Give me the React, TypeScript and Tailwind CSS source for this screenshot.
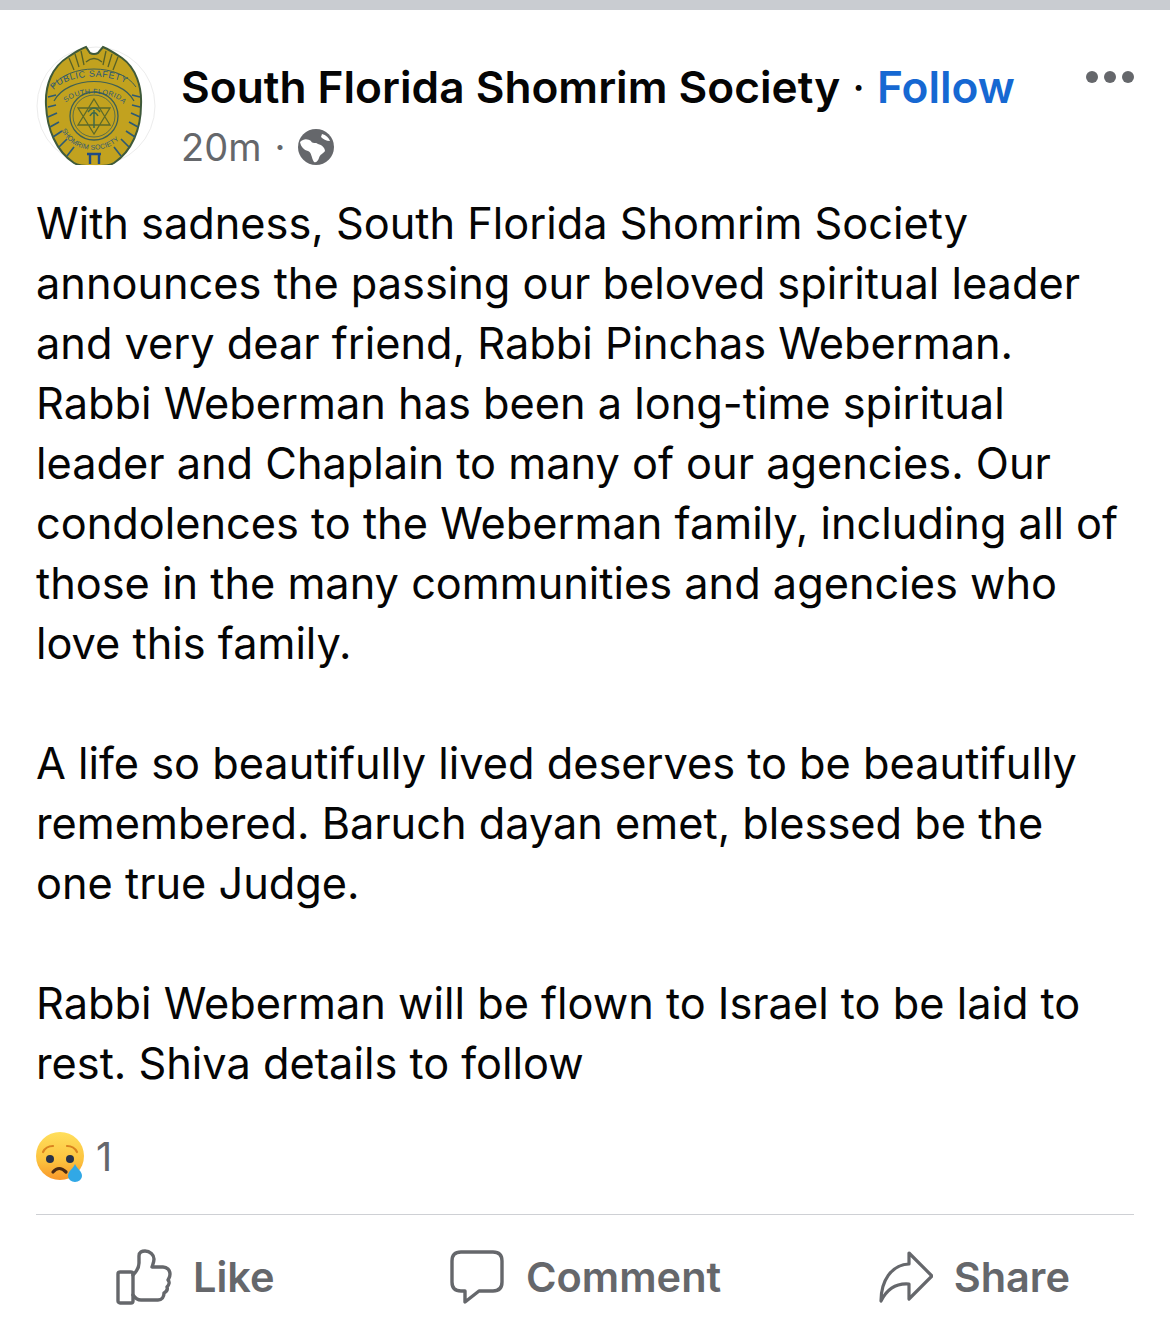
const lines = [
  "With sadness, South Florida Shomrim Society",
  "announces the passing our beloved spiritual leader",
  "and very dear friend, Rabbi Pinchas Weberman.",
  "Rabbi Weberman has been a long-time spiritual",
  "leader and Chaplain to many of our agencies. Our",
  "condolences to the Weberman family, including all of",
  "those in the many communities and agencies who",
  "love this family.",
  "",
  "A life so beautifully lived deserves to be beautifully",
  "remembered. Baruch dayan emet, blessed be the",
  "one true Judge.",
  "",
  "Rabbi Weberman will be flown to Israel to be laid to",
  "rest. Shiva details to follow",
]

function Badge() {
  return (
    <svg width="120" height="122" viewBox="0 0 120 122">
      <defs>
        <path id="arcPublic" d="M17 46C32 27 84 27 100 46" />
        <path id="arcSouth" d="M28 60C38 45 78 45 88 60" />
        <path id="arcShomrim" d="M25 84C37 112 80 112 91 82" />
        <clipPath id="badgeClip">
          <rect x="0" y="0" width="120" height="120" />
        </clipPath>
      </defs>
      <circle cx="60" cy="61" r="59" fill="#fff" stroke="#ececec" strokeWidth="1" />
      <g clipPath="url(#badgeClip)">
        <path d="M10 60C9 40 16 22 32 12C38 8 44 4 50 2L54 8Q58 10 62 8L67 2C74 5 80 9 86 13C100 23 106 42 105 60C105 84 96 106 78 118C72 122 44 122 38 118C20 106 11 84 10 60Z" fill="#c2a21f" stroke="#3f5a3a" strokeWidth="2" />
      </g>
      <path d="M33 13L38 25M39 9L43 22M45 6L48 20M70 6L67 20M76 9L72 22M82 12L77 25M50 17Q58 10 66 17" stroke="#566127" strokeWidth="1.3" fill="none" />
      <path d="M16 42C32 18 84 18 100 42" fill="none" stroke="#3d5f55" strokeWidth="1" />
      <path d="M18 56C32 30 84 30 98 56" fill="none" stroke="#3d5f55" strokeWidth="1.2" />
      <circle cx="58" cy="71" r="24" fill="none" stroke="#3d5f55" strokeWidth="1.3" />
      <circle cx="58" cy="71" r="21" fill="none" stroke="#3d5f55" strokeWidth="0.8" />
      <path d="M58 54L74 80H42ZM58 89L42 63H74Z" fill="none" stroke="#5c6a2a" strokeWidth="1.3" />
      <path d="M58 65V83M52 67Q58 59 64 67M54 71Q58 64 62 71" fill="none" stroke="#3e6a4c" strokeWidth="1.5" />
      <path d="M12 52L20 50M12 62L20 60M12 72L21 68M14 82L23 77M17 92L26 86M23 102L31 94M31 111L38 102M104 52L96 50M104 62L96 60M104 72L95 68M102 82L93 77M99 92L90 86M93 102L85 94M85 111L78 102" stroke="#2d5a74" strokeWidth="1.7" />
      <text fontFamily="'Liberation Sans', sans-serif" fontSize="9" fill="#2c5878" letterSpacing="0.5">
        <textPath href="#arcPublic" startOffset="1">PUBLIC SAFETY</textPath>
      </text>
      <text fontFamily="'Liberation Sans', sans-serif" fontSize="7.2" fill="#2c5878" letterSpacing="0.3">
        <textPath href="#arcSouth" startOffset="3">SOUTH FLORIDA</textPath>
      </text>
      <text fontFamily="'Liberation Sans', sans-serif" fontSize="7" fill="#2c5878" letterSpacing="0.1">
        <textPath href="#arcShomrim" startOffset="1">SHOMRIM SOCIETY</textPath>
      </text>
      <path d="M51 109H65M54 109V119M63 109V119" stroke="#1f4b86" strokeWidth="2.4" fill="none" />
    </svg>
  )
}

function SadFace() {
  return (
    <svg width="50" height="50" viewBox="0 0 50 50">
      <defs>
        <linearGradient id="face" x1="0" y1="0" x2="0" y2="1">
          <stop offset="0%" stopColor="#ffdf5c" />
          <stop offset="60%" stopColor="#fcc23e" />
          <stop offset="100%" stopColor="#f8972a" />
        </linearGradient>
      </defs>
      <circle cx="24" cy="24" r="24" fill="url(#face)" />
      <path d="M7 20Q10 14 17 14M41 20Q38 14 31 14" fill="none" stroke="#d9821f" strokeWidth="2.2" strokeLinecap="round" />
      <circle cx="14" cy="27" r="4" fill="#27324a" />
      <circle cx="34" cy="27" r="4" fill="#27324a" />
      <path d="M17 40Q23 33 30 40" fill="none" stroke="#4a2a14" strokeWidth="3.2" strokeLinecap="round" />
      <path d="M39 32C41 37 46 39 46 44A7 6 0 0 1 32 44C32 39 37 37 39 32Z" fill="#31a8e6" />
    </svg>
  )
}

function LikeIcon() {
  return (
    <svg width="56" height="56" viewBox="0 0 56 56" fill="none" stroke="#65676b" strokeWidth="3.4" strokeLinejoin="round" strokeLinecap="round">
      <rect x="2" y="23" width="15" height="31" rx="2" />
      <path d="M17 26C20 23 23 19 23 14V7C23 3 26 2 29 2C34 2 38 6 38 10C38 13 37 15 36 18H47C51 18 54 21 54 25C54 28 53 29 52 31C54 33 53 36 51 38C52 41 50 43 48 44C48 48 46 51 42 51H25C21 51 19 49 17 46" />
    </svg>
  )
}

function CommentIcon() {
  return (
    <svg width="56" height="54" viewBox="0 0 56 54" fill="none" stroke="#65676b" strokeWidth="3.4" strokeLinejoin="round" strokeLinecap="round">
      <path d="M12 2H44C50 2 53 5 53 11V32C53 38 50 41 44 41H30L16 52V41H12C6 41 3 38 3 32V11C3 5 6 2 12 2Z" />
    </svg>
  )
}

function ShareIcon() {
  return (
    <svg width="54" height="52" viewBox="0 0 54 52" fill="none" stroke="#65676b" strokeWidth="3.2" strokeLinejoin="round" strokeLinecap="round">
      <path d="M2 50C2 30 12 14 30 13V2L53 25L30 48V33C18 32 8 38 2 50Z" />
    </svg>
  )
}

function Globe() {
  return (
    <svg width="36" height="36" viewBox="0 0 36 36">
      <circle cx="18" cy="18" r="18" fill="#65676b" />
      <path d="M2 13C6 9 10 10 13 12C14 15 18 13 20 15C24 16 27 19 27 22C25 25 22 25 21 29C20 32 18 34 16 33C13 28 14 24 10 22C6 21 3 18 2 13ZM24 5C28 6 31 9 32 12C28 12 25 10 23 8Z" fill="#fff" />
    </svg>
  )
}

export default function App() {
  return (
    <div className="w-[1170px] h-[1328px] bg-white overflow-hidden font-['Inter',sans-serif]">
      <div className="h-[10px] bg-[#c9ccd1]" />
      <div className="px-[36px]">
        <div className="flex items-start pt-[35px]">
          <Badge />
          <div className="ml-[25px] mt-[12px] flex-1">
            <div className="flex items-center h-[60px] text-[44.2px] font-semibold text-[#050505] whitespace-nowrap">
              <span>South Florida Shomrim Society</span>
              <span className="mx-[12px] font-normal">·</span>
              <span className="text-[#1668d2]">Follow</span>
            </div>
            <div className="flex items-center mt-[5px] h-[50px] text-[#65676b] text-[38px]">
              <span>20m</span>
              <span className="mx-[13px]">·</span>
              <Globe />
            </div>
          </div>
          <div className="flex gap-[6px] mt-[26px]">
            <span className="w-[12px] h-[12px] rounded-full bg-[#65676b]" />
            <span className="w-[12px] h-[12px] rounded-full bg-[#65676b]" />
            <span className="w-[12px] h-[12px] rounded-full bg-[#65676b]" />
          </div>
        </div>

        <div className="mt-[21px] text-[43.3px] leading-[60px] text-[#050505] whitespace-nowrap">
          {lines.map((line, i) => (
            <div key={i} className="h-[60px]">{line}</div>
          ))}
        </div>

        <div className="flex items-center mt-[39px] h-[50px]">
          <SadFace />
          <span className="ml-[10px] text-[40px] text-[#65676b]">1</span>
        </div>

        <div className="mt-[32px] border-t border-[#ced0d4]" />

        <div className="flex items-center justify-between h-[124px] pl-[80px] pr-[64px]">
          <div className="flex items-center gap-[21px]">
            <LikeIcon />
            <span className="text-[41.5px] font-semibold text-[#65676b]">Like</span>
          </div>
          <div className="flex items-center gap-[21px] ml-[17px]">
            <CommentIcon />
            <span className="text-[41.5px] font-semibold text-[#65676b]">Comment</span>
          </div>
          <div className="flex items-center gap-[21px]">
            <ShareIcon />
            <span className="text-[41.5px] font-semibold text-[#65676b]">Share</span>
          </div>
        </div>
      </div>
    </div>
  )
}
